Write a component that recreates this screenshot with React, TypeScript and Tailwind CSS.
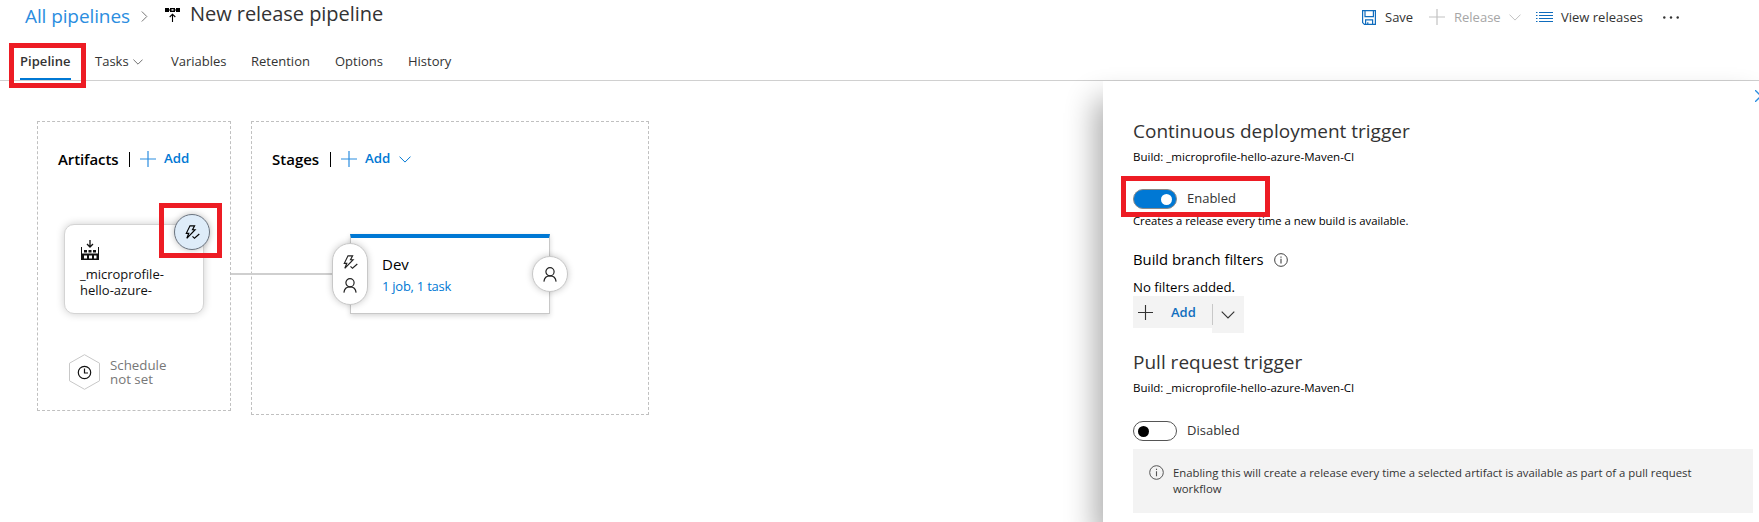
import React from "react";

type IconProps = { className?: string };

const Plus = ({ className = "" }: IconProps) => (
  <svg className={`size-4 shrink-0 ${className}`} viewBox="0 0 16 16" fill="none" stroke="currentColor" strokeWidth="1.2">
    <path d="M8 0v16M0 8h16" />
  </svg>
);

const ChevronDown = ({ className = "" }: IconProps) => (
  <svg className={`shrink-0 ${className}`} viewBox="0 0 12 7" fill="none" stroke="currentColor" strokeWidth="1">
    <path d="M.5.6 6 6.1 11.5.6" />
  </svg>
);

const Bolt = ({ className = "" }: IconProps) => (
  <svg className={`h-[15px] w-[15px] shrink-0 ${className}`} viewBox="0 0 15 15" fill="none" stroke="currentColor" strokeWidth="1.150">
    <path d="M5 .8h4.600L7.500 4.700h2.600L1.800 13.300l2-5H1.300z" />
    <path d="M7.500 11.300l2 2 4.800-4.300" />
  </svg>
);

const Person = ({ className = "" }: IconProps) => (
  <svg className={`h-[15px] w-[14px] shrink-0 ${className}`} viewBox="0 0 14 15" fill="none" stroke="currentColor" strokeWidth="1.2">
    <circle cx="7" cy="4.8" r="4.1" />
    <path d="M.9 14.6C1.3 11 3.8 8.9 7 8.9s5.7 2.1 6.1 5.7" />
  </svg>
);

const Info = ({ className = "" }: IconProps) => (
  <svg className={`shrink-0 ${className}`} viewBox="0 0 15 15" fill="none" stroke="currentColor">
    <circle cx="7.5" cy="7.5" r="6.8" strokeWidth="1" />
    <path d="M7.5 6.2v5M7.5 3.8v1.2" strokeWidth="1.1" />
  </svg>
);

const Highlight = ({ className }: { className: string }) => (
  <div className={`pointer-events-none absolute z-20 border-5 border-[#ed1c24] ${className}`} />
);

function Header() {
  return (
    <header className="relative h-[81px] border-b border-[#d0d0d0]">
      <div className="flex h-8 items-start">
        <div className="w-[116px] pl-[25px] text-[19px] leading-8 whitespace-nowrap tracking-[-0.1px] text-[#2b8de0]">All pipelines</div>
        <svg className="mt-[11px] ml-[25px] h-[11px] w-[7px]" viewBox="0 0 7 11" fill="none" stroke="#777" strokeWidth="1">
          <path d="M.8.500l5 5-5 5" />
        </svg>
        <svg className="mt-2 ml-[17px] h-[14px] w-[15px]" viewBox="0 0 15 14">
          <path d="M0 0h4v4H0zM11 0h4v4h-4z" fill="#000" />
          <path d="M5 0h5v4H5z" fill="#000" />
          <path d="M6.5 1.2h2v1.4h-2z" fill="#fff" />
          <path d="M4 1.5h1v1H4zM10 1.5h1v1h-1z" fill="#000" />
          <path d="M7.5 14V6.5M4.7 9l2.8-2.8L10.3 9" fill="none" stroke="#000" strokeWidth="1.1" />
        </svg>
        <div className="ml-[10px] text-[20px] leading-[27px] tracking-[-0.05px] whitespace-nowrap text-[#333]">New release pipeline</div>
        <div className="mt-[5px] mr-[80px] ml-auto flex h-6 items-center text-[13px] text-[#333]">
          <svg className="h-[15px] w-[14px]" viewBox="0 0 14 15" fill="none" stroke="#0f6cbd" strokeWidth="1.2">
            <path d="M.6.6h12.8v13.8H2.4L.6 12.6zM3 .6v6h8.400v-6M3.600 14.400V9.800h7v4.600M5.800 14.400v-2.200" />
          </svg>
          <div className="ml-[9px] w-11 pt-[2px]">Save</div>
          <Plus className="text-[#c2c2c2]" />
          <div className="ml-[9px] w-[55px] pt-[2px] text-[#a6a6a6]">Release</div>
          <ChevronDown className="h-[7px] w-3 text-[#c2c2c2]" />
          <svg className="ml-[15px] h-3 w-[17px]" viewBox="0 0 17 12" stroke="#0f6cbd" strokeWidth="1">
            <path d="M0 1.500h1.500M3 1.500h14M0 4.500h1.500M3 4.500h14M0 7.500h1.500M3 7.500h14M0 10.500h1.500M3 10.500h14" />
          </svg>
          <div className="ml-2 w-[102px] pt-[2px]">View releases</div>
          <svg className="h-[3px] w-4" viewBox="0 0 16 3" fill="#333">
            <circle cx="1.300" cy="1.500" r="1.200" />
            <circle cx="8" cy="1.500" r="1.200" />
            <circle cx="14.700" cy="1.500" r="1.200" />
          </svg>
        </div>
      </div>
      <nav className="flex h-12 pl-5 text-[13px] leading-[58px] text-[#333]">
        <div className="h-12 w-[51px] border-b-2 border-[#0078d4] font-semibold tracking-[0.050px]">Pipeline</div>
        <div className="ml-6 flex w-[76px]">
          <span className="w-[38px]">Tasks</span>
          <ChevronDown className="mt-[27px] h-[6px] w-[10px] text-[#555]" />
        </div>
        <div className="w-20">Variables</div>
        <div className="w-[84px]">Retention</div>
        <div className="w-[73px]">Options</div>
        <div>History</div>
      </nav>
      <Highlight className="top-[43px] left-[9px] h-[45px] w-[77px]" />
    </header>
  );
}

function Artifacts() {
  return (
    <section className="h-[290px] w-[194px] shrink-0 border border-dashed border-[#c0c0c0]">
      <div className="mt-7 ml-5 flex h-[18px] items-center">
        <h2 className="w-[71px] text-[15px] leading-[18px] font-semibold tracking-[-0.1px] text-black">Artifacts</h2>
        <div className="h-[15px] w-px bg-black" />
        <Plus className="ml-[10px] text-[#2b8de0]" />
        <div className="ml-2 text-[13.300px] font-semibold text-[#0078d4]">Add</div>
      </div>
      <div className="relative mt-14 ml-[26px] h-[90px] w-[140px] rounded-[10px] border border-[#d4d4d4] bg-white pt-[15px] pl-4 shadow-[0_0_8px_rgba(0,0,0,0.2)]">
        <svg className="h-5 w-[18px]" viewBox="0 0 18 20" fill="#111">
          <path d="M9 0v6.500M6 4l3 3 3-3" fill="none" stroke="#111" strokeWidth="1.300" />
          <path fillRule="evenodd" d="M0 7h1v6.500h16V7h1v13H0zM3 15.500h3v3H3zM8 15.500h3v3H8zM13 15.500h2.500v3H13z" />
          <path d="M3 10h3v2.500H3zM7.500 10h3v2.500h-3zM12 10h3v2.500h-3z" />
        </svg>
        <p className="mt-[6px] -ml-px text-[13px] leading-4 whitespace-nowrap text-[#111]">
          _microprofile-
          <br />
          hello-azure-
        </p>
        <div className="absolute -top-[11px] left-[109px] flex size-9 items-center justify-center rounded-full border border-[#6b7480] bg-[#deecf9] text-black shadow-[0_0_6px_rgba(0,0,0,0.25)]">
          <Bolt />
        </div>
        <Highlight className="-top-[22px] left-[94px] h-[55px] w-[63px]" />
      </div>
      <div className="mt-10 ml-[31px] flex h-9 items-center">
        <svg className="h-9 w-[31px]" viewBox="0 0 31 36" fill="none">
          <path d="M15.500.7 30.500 9.200v17.600l-15 8.500-15-8.500V9.200z" stroke="#c8c8c8" />
          <circle cx="15.500" cy="18.500" r="6.200" stroke="#111" strokeWidth="1.200" />
          <path d="M15.500 14.500v4.500h3.500" stroke="#111" strokeWidth="1.200" />
        </svg>
        <p className="ml-[10px] text-[13.300px] leading-[14px] text-[#777]">
          Schedule
          <br />
          not set
        </p>
      </div>
    </section>
  );
}

function Stages() {
  return (
    <section className="h-[294px] w-[398px] shrink-0 border border-dashed border-[#c0c0c0]">
      <div className="mt-7 ml-5 flex h-[18px] items-center">
        <h2 className="w-[58px] text-[15px] leading-[18px] font-semibold text-black">Stages</h2>
        <div className="h-[15px] w-px bg-black" />
        <Plus className="ml-[10px] text-[#2b8de0]" />
        <div className="ml-2 w-[34px] text-[13.300px] font-semibold text-[#0078d4]">Add</div>
        <ChevronDown className="h-[7px] w-3 text-[#0078d4]" />
      </div>
      <div className="relative mt-[66px] ml-[98px] h-20 w-[200px] border border-t-4 border-[#c8c8c8] border-t-[#0078d4] bg-white pt-4 pl-[31px] shadow-[0_2px_5px_rgba(0,0,0,0.16)]">
        <div className="text-[15px] leading-5 text-black">Dev</div>
        <div className="mt-[2px] text-[13px] leading-5 tracking-[-0.250px] text-[#0078d4]">1 job, 1 task</div>
        <div className="absolute top-[35px] -left-[120px] h-[2px] w-[102px] bg-[#cfcfcf]" />
        <div className="absolute top-[5px] -left-[19px] flex h-[62px] w-9 flex-col items-center justify-center gap-2 rounded-full border border-[#c8c8c8] bg-white text-[#222] shadow-[0_0_7px_rgba(0,0,0,0.22)]">
          <Bolt />
          <Person />
        </div>
        <div className="absolute top-[18px] left-[181px] flex size-9 items-center justify-center rounded-full border border-[#c8c8c8] bg-white text-[#222] shadow-[0_0_7px_rgba(0,0,0,0.22)]">
          <Person />
        </div>
      </div>
    </section>
  );
}

function TriggerPanel() {
  return (
    <aside className="relative w-[656px] shrink-0 bg-white pl-[30px] text-black shadow-[-8px_18px_28px_rgba(0,0,0,0.32)]">
      <svg className="absolute top-[9px] left-[652px] h-3 w-3" viewBox="0 0 12 12" stroke="#2b8de0" strokeWidth="1.300">
        <path d="M0 0l12 12M12 0 0 12" />
      </svg>
      <h2 className="mt-[35px] text-[19px] leading-[30px] text-[#333]">Continuous deployment trigger</h2>
      <p className="mt-px text-[11.500px] leading-5">Build: _microprofile-hello-azure-Maven-CI</p>
      <div className="mt-[22px] flex h-5 items-center">
        <div className="flex h-5 w-11 items-center justify-end rounded-full border border-[#8a8a8a] bg-[#0078d4] pr-1">
          <div className="size-[11px] rounded-full bg-white" />
        </div>
        <span className="ml-[10px] text-[13px] text-[#333]">Enabled</span>
      </div>
      <Highlight className="top-[95px] left-[18px] h-[41px] w-[149px]" />
      <p className="mt-[2px] text-[11.300px] leading-5">Creates a release every time a new build is available.</p>
      <div className="mt-[18px] flex h-5 items-center">
        <h3 className="w-[141px] text-[14.800px]">Build branch filters</h3>
        <Info className="mt-px size-[14px] text-[#333]" />
      </div>
      <p className="mt-2 text-[13.200px] leading-5">No filters added.</p>
      <div className="-mt-px flex h-[37px] items-start">
        <div className="flex h-8 w-[79px] items-center bg-[#f3f3f3] pl-[5px] text-[#333]">
          <Plus className="size-[15px]" />
          <span className="ml-[18px] pt-[2px] text-[13px] font-semibold text-[#106ebe]">Add</span>
        </div>
        <div className="flex h-[37px] w-8 bg-[#f3f3f3]">
          <div className="mt-2 h-[21px] w-px bg-[#c8c8c8]" />
          <ChevronDown className="mt-[15px] ml-2 h-2 w-[14px] text-[#333]" />
        </div>
      </div>
      <h2 className="mt-[14px] text-[19px] leading-[30px] text-[#333]">Pull request trigger</h2>
      <p className="mt-px text-[11.500px] leading-5">Build: _microprofile-hello-azure-Maven-CI</p>
      <div className="mt-[23px] flex h-5 items-center">
        <div className="flex h-5 w-11 items-center rounded-full border border-[#555] bg-white pl-1">
          <div className="size-[11px] rounded-full bg-black" />
        </div>
        <span className="ml-[10px] text-[13px] text-[#333]">Disabled</span>
      </div>
      <div className="mt-2 flex h-16 w-[620px] items-start bg-[#f3f3f3] pt-4 pl-4 text-[#333]">
        <Info className="size-[15px] text-[#555]" />
        <p className="ml-[9px] w-[530px] text-[11.350px] leading-4">
          Enabling this will create a release every time a selected artifact is available as part of a pull request workflow
        </p>
      </div>
    </aside>
  );
}

export default function App() {
  return (
    <div className="h-[522px] w-[1759px] overflow-hidden bg-white font-['Open_Sans','Noto_Sans',sans-serif]">
      <Header />
      <main className="flex h-[441px]">
        <div className="flex w-[1103px] gap-5 pt-10 pl-[37px]">
          <Artifacts />
          <Stages />
        </div>
        <TriggerPanel />
      </main>
    </div>
  );
}
